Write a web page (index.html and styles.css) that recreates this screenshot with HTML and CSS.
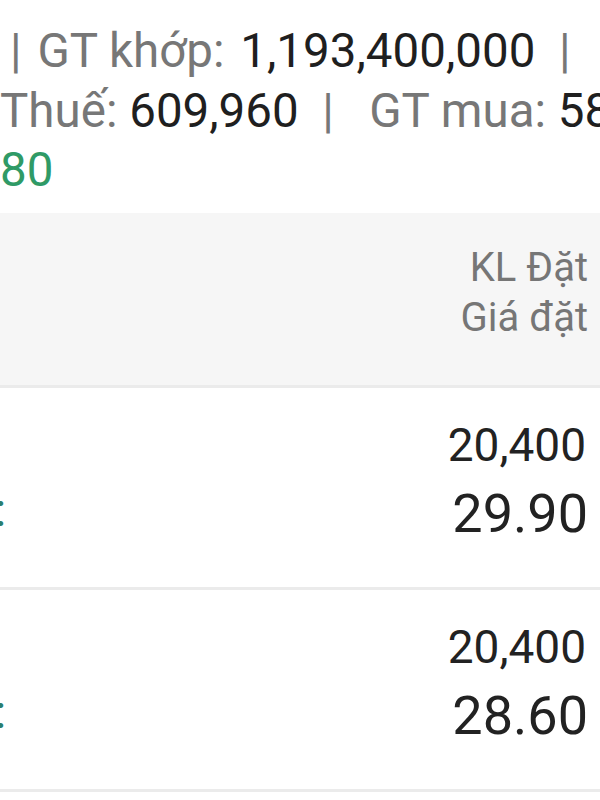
FILE: index.html
```html
<!DOCTYPE html>
<html lang="vi">
<head>
    <meta charset="UTF-8">
    <meta name="viewport" content="width=device-width, initial-scale=1.0">
    <title>Sổ lệnh</title>
    <link rel="stylesheet" href="styles.css">
</head>
<body>
    <!-- Order summary, wrapped over three lines -->
    <div class="summary">
        <div class="line first"><span class="sep">|</span> <span class="lbl lead">GT khớp:</span> <span class="val">1,193,400,000</span>  <span class="sep">|</span></div>
        <div class="line"><span class="lbl">Thuế:</span> <span class="val">609,960</span>  <span class="sep">|</span>   <span class="lbl">GT mua:</span> <span class="val">584,200,000</span></div>
        <div class="line"><span class="val green">80</span></div>
    </div>

    <!-- Column header -->
    <div class="head">
        <div>KL Đặt</div>
        <div>Giá đặt</div>
    </div>

    <!-- Orders -->
    <div class="row">
        <span class="side">:</span>
        <div class="nums">
            <div class="qty">20,400</div>
            <div class="price">29.90</div>
        </div>
    </div>
    <div class="row">
        <span class="side">:</span>
        <div class="nums">
            <div class="qty">20,400</div>
            <div class="price">28.60</div>
        </div>
    </div>
</body>
</html>
```

FILE: styles.css
```css
body {
    margin: 0;
    font-family: Roboto, "Noto Sans", sans-serif;
    background-color: #fff;
    color: #212121;
    overflow: hidden;
}

.summary {
    padding: 22px 0 12px;
    font-size: 47.5px;
    line-height: 59.5px;
    overflow: hidden;
}

.summary .line {
    white-space: pre;
}

.summary .first {
    padding-left: 10px;
}

.summary .lead {
    margin-left: 4px;
    margin-right: 4px;
}

.summary .lbl, .summary .sep {
    color: #777;
}

.summary .val {
    color: #1f1f1f;
}

.summary .green {
    color: #2f9a66;
}

.head {
    padding: 30px 12px 42px;
    background-color: #f6f6f6;
    border-bottom: 3px solid #ebebeb;
    text-align: right;
    font-size: 40px;
    line-height: 50px;
    color: #767676;
}

.row {
    display: flex;
    justify-content: space-between;
    align-items: flex-start;
    padding: 30px 12px 40px 0;
    border-bottom: 3px solid #ebebeb;
}

.side {
    margin: 65px 0 0 -5px;
    font-size: 46px;
    line-height: 54px;
    color: #2a7f70;
}

.nums {
    display: flex;
    flex-direction: column;
    align-items: flex-end;
    color: #222;
}

.qty {
    margin-right: 2px;
    font-size: 46px;
    line-height: 54px;
}

.price {
    margin-top: 9px;
    font-size: 54px;
    line-height: 66px;
}
```
